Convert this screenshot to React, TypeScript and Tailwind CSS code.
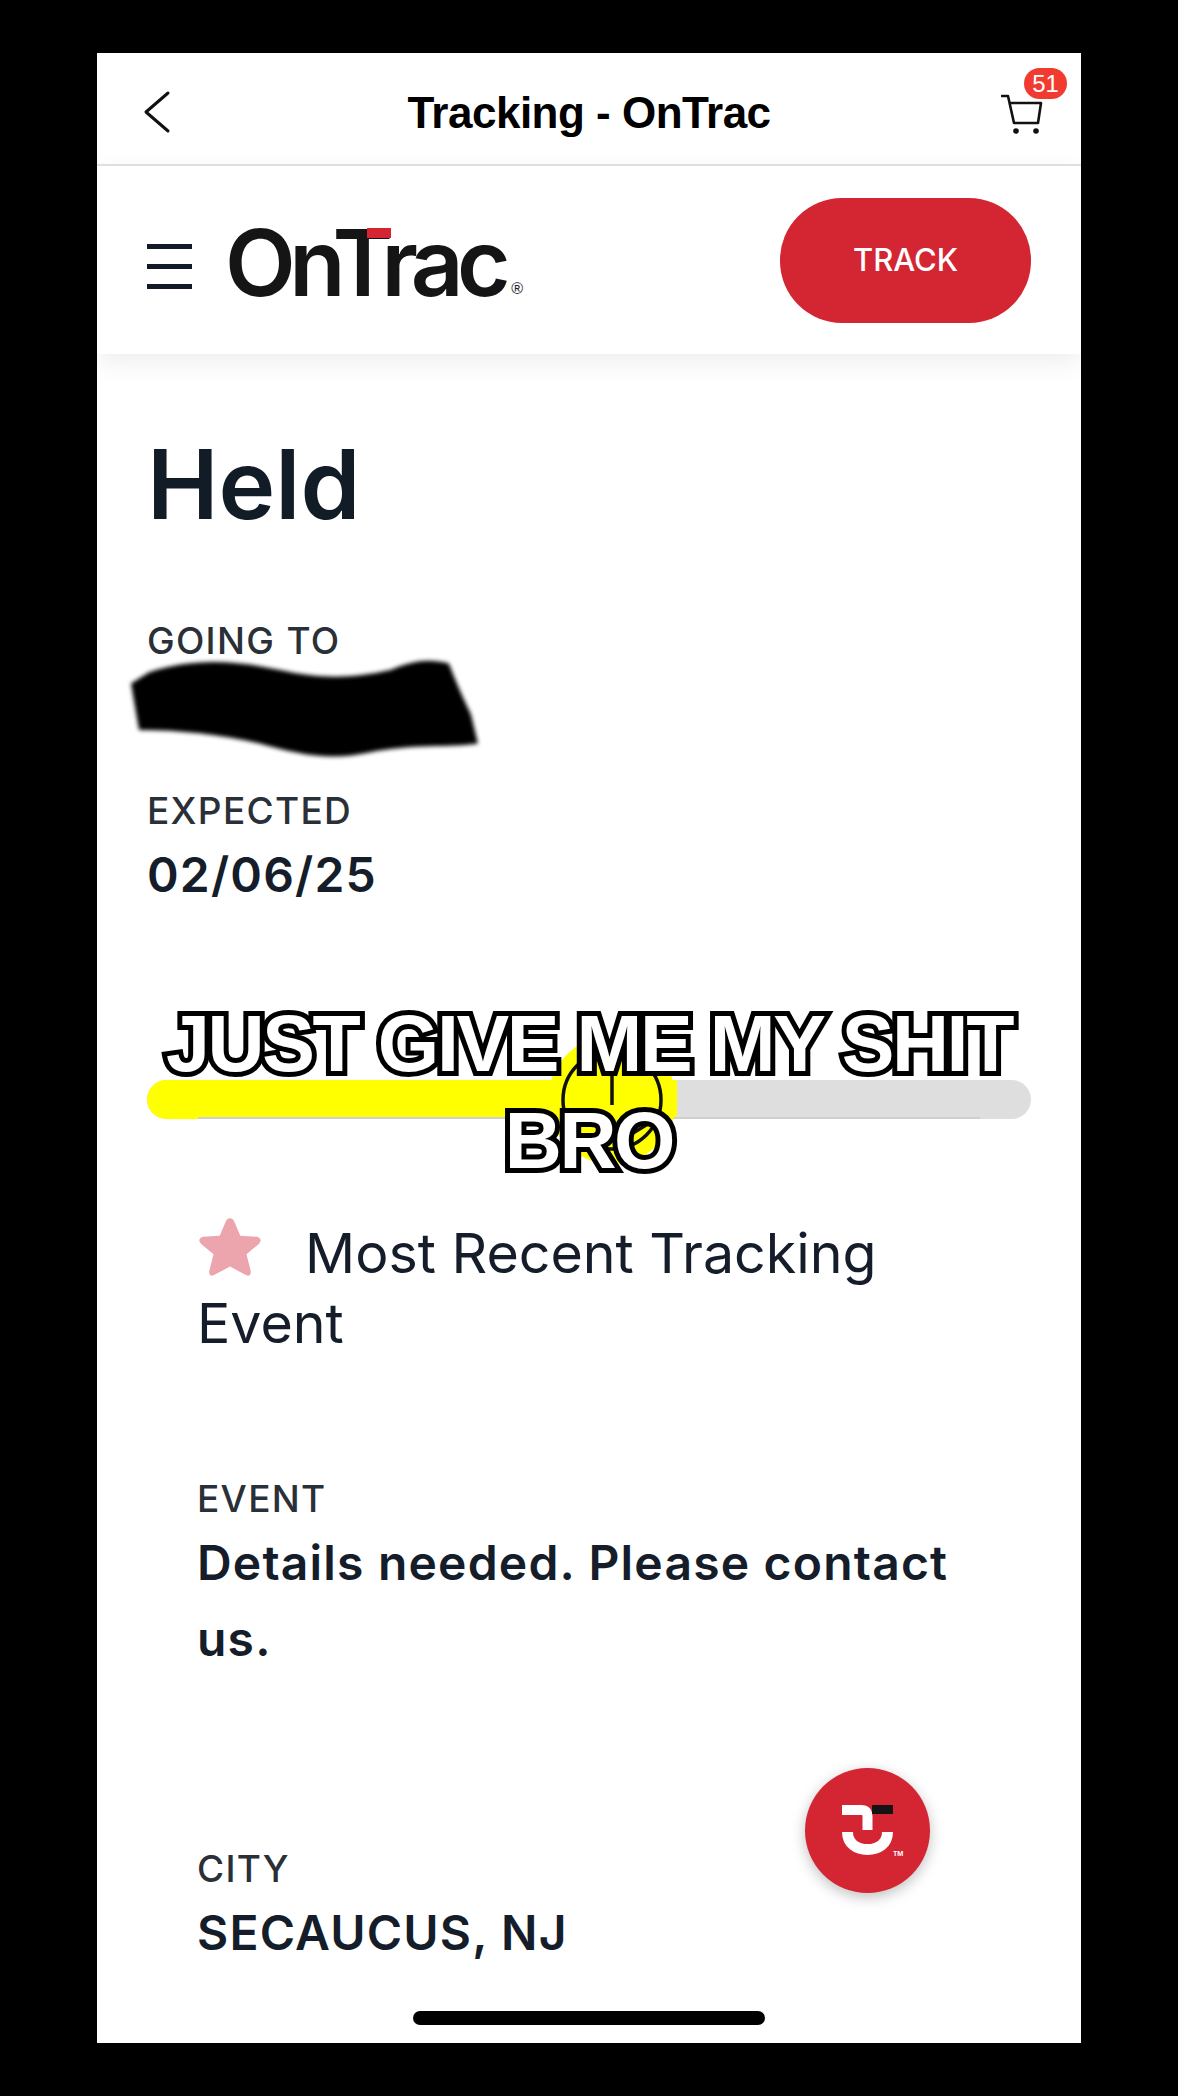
export default function App() {
  const label = "text-[37px] leading-[42px] font-medium text-[#2a3037] tracking-[1.3px]";
  const value = "text-[48px] leading-[56px] font-semibold text-[#141d29] tracking-[1.2px]";
  return (
    <div className="h-[2096px] w-[1178px] overflow-hidden bg-black pt-[53px] pl-[97px] font-['Inter',sans-serif]">
      <div className="relative flex h-[1990px] w-[984px] flex-col overflow-hidden bg-white">
        {/* iOS bar */}
        <header className="relative flex h-[113px] shrink-0 items-center justify-center border-b-2 border-[#e2e2e2] pt-[8px]">
          <svg className="absolute left-[45px] top-[37px]" width="30" height="44" viewBox="0 0 30 44" fill="none">
            <path d="M26 3 L4 22 L26 41" stroke="#111" strokeWidth="3" strokeLinecap="round" strokeLinejoin="round" />
          </svg>
          <h1 className="text-[44px] font-bold text-black tracking-[-0.5px] font-['Liberation_Sans',sans-serif]">Tracking - OnTrac</h1>
          <svg className="absolute left-[904px] top-[40px]" width="42" height="42" viewBox="0 0 42 42" fill="none">
            <path d="M1 3 H7 L13 30 H37 L40 10 H9" stroke="#111" strokeWidth="2.6" strokeLinejoin="round" strokeLinecap="round" />
            <circle cx="15" cy="38" r="2.8" fill="#111" />
            <circle cx="35" cy="38" r="2.8" fill="#111" />
          </svg>
          <span className="absolute left-[927px] top-[15px] flex h-[31px] w-[43px] items-center justify-center rounded-full bg-[#f23b30] text-[24px] text-white font-['Liberation_Sans',sans-serif]">51</span>
        </header>

        {/* site nav */}
        <nav className="relative z-10 flex h-[188px] shrink-0 items-center justify-between bg-white pl-[50px] pr-[50px] shadow-[0_8px_24px_rgba(0,0,0,0.07)]">
          <div className="flex items-center">
            <div className="mt-[12px] flex w-[45px] flex-col gap-[15px]">
              <span className="h-[5px] bg-[#111a26]" />
              <span className="h-[5px] bg-[#111a26]" />
              <span className="h-[5px] bg-[#111a26]" />
            </div>
            <div className="relative ml-[33px] mt-[6px] flex items-end">
              <span className="text-[92px] leading-[92px] font-semibold tracking-[-6.5px] text-[#151515]">OnTrac</span>
              <span className="absolute left-[142px] top-[11px] h-[10px] w-[24px] bg-[#d32532]" />
              <span className="mb-[12px] ml-[7px] text-[16px] leading-[16px] text-[#222] font-['Liberation_Sans',sans-serif]">®</span>
            </div>
          </div>
          <button className="flex h-[125px] w-[251px] items-center justify-center rounded-[62px] bg-[#d32532] text-[31px] font-medium text-white">TRACK</button>
        </nav>

        {/* shipment summary */}
        <main className="flex flex-col px-[50px] pt-[75px]">
          <h2 className="text-[96px] leading-[110px] font-semibold text-[#111c27]">Held</h2>
          <p className={`mt-[81px] ${label}`}>GOING TO</p>
          <div className="relative -ml-[18px] -mt-[3px] h-[96px]">
            <svg width="352" height="100" viewBox="0 0 350 90" preserveAspectRatio="none" className="blur-[2px]">
              <path d="M2 22 L20 12 C60 0 100 0 150 10 C190 18 220 18 260 10 C285 0 300 0 318 4 C325 20 332 35 340 50 L347 76 C320 80 280 76 240 84 C200 92 170 86 130 76 C90 68 50 64 10 64 Z" fill="#000" />
            </svg>
          </div>
          <p className={`mt-[35px] ${label}`}>EXPECTED</p>
          <p className={`mt-[15px] ${value}`}>02/06/25</p>

          {/* progress */}
          <div className="relative mt-[177px] h-[39px] rounded-full bg-[#dedede]">
            <div className="h-[39px] w-[530px] rounded-l-full bg-[#ffff00]" />
            <div className="absolute left-[51px] right-[51px] top-[37px] h-[2px] bg-[#cfcfcf]" />
            <svg className="absolute left-[400px] top-[-40px]" width="140" height="130" viewBox="0 0 140 130" fill="none">
              <circle cx="65" cy="60" r="64" fill="#ffff00" />
              <circle cx="65" cy="60" r="49" stroke="#111" strokeWidth="3.5" />
              <path d="M65 15 V65 M78 98 L104 82" stroke="#111" strokeWidth="3.5" />
            </svg>
          </div>

          {/* recent event */}
          <div className="relative z-0 px-[50px] pt-[96px]">
            <h3 className="text-[55.5px] leading-[70px] text-[#141d29]">
              <svg className="mr-[42px] inline-block align-[-6px]" width="66" height="64" viewBox="0 0 64 62">
                <path d="M32 3 C34 3 35 4 36 6 L42 20 L58 21 C62 22 63 25 60 28 L48 38 L52 54 C53 58 50 60 47 58 L32 50 L17 58 C14 60 11 58 12 54 L16 38 L4 28 C1 25 2 22 6 21 L22 20 L28 6 C29 4 30 3 32 3 Z" fill="#eda5ad" />
              </svg>
              Most Recent Tracking Event
            </h3>
            <p className={`mt-[120px] ${label}`}>EVENT</p>
            <p className="mt-[5px] text-[48px] leading-[76px] font-semibold text-[#141d29] tracking-[1.2px]">Details needed. Please contact us.</p>
            <p className={`mt-[171px] ${label}`}>CITY</p>
            <p className={`mt-[15px] ${value}`}>SECAUCUS, NJ</p>
          </div>
        </main>

        {/* chat button */}
        <div className="absolute left-[708px] top-[1715px] flex h-[125px] w-[125px] items-center justify-center rounded-full bg-[#d32532] shadow-[0_4px_14px_rgba(0,0,0,0.25)]">
          <svg width="125" height="125" viewBox="0 0 125 125" fill="none">
            <path d="M37 42 H56 C61 42 62.5 44 62.5 49 V62" stroke="#fff" strokeWidth="10" />
            <rect x="67" y="37" width="21" height="9" fill="#141414" />
            <path d="M42.5 64 C42.5 76 52 81.5 62.5 81.5 C73 81.5 82.5 76 82.5 64" stroke="#fff" strokeWidth="11" />
            <text x="88" y="88" fontSize="6.5" fontWeight="700" fill="#fff">TM</text>
          </svg>
        </div>

        {/* home indicator */}
        <div className="absolute bottom-[18px] left-[316px] h-[14px] w-[352px] rounded-full bg-black" />

        {/* video caption */}
        <div className="absolute left-0 top-[942px] w-full text-center text-[79px] leading-[97px] font-bold tracking-[-2.4px] text-white [-webkit-text-stroke:10px_#000] [paint-order:stroke_fill] font-['Liberation_Sans',sans-serif]">
          JUST GIVE ME MY SHIT
          <br />
          BRO
        </div>
      </div>
    </div>
  );
}
